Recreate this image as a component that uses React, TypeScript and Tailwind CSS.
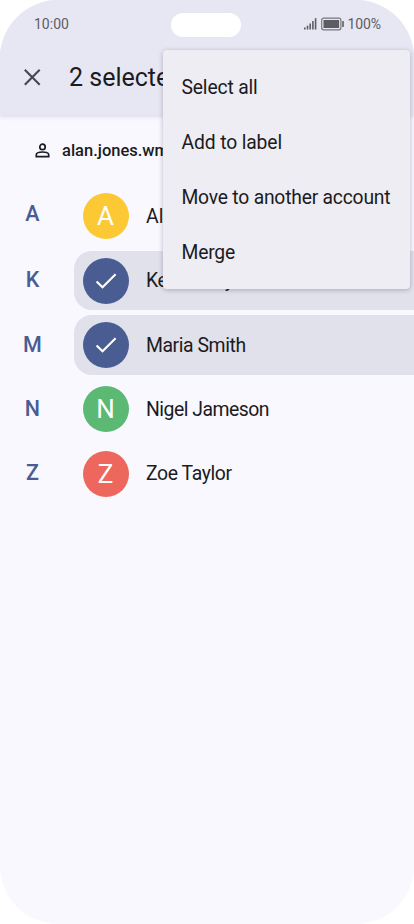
const contacts = [
  { letter: "A", name: "Alan Jones", color: "bg-[#fcc934]", selected: false, offset: "mb-1", tracking: "tracking-[0.1px]" },
  { letter: "K", name: "Kevin Gray", color: "bg-[#495d92]", selected: true, offset: "mb-0", tracking: "tracking-[-0.3px]" },
  { letter: "M", name: "Maria Smith", color: "bg-[#495d92]", selected: true, offset: "mb-0", tracking: "tracking-[-0.43px]" },
  { letter: "N", name: "Nigel Jameson", color: "bg-[#5bb974]", selected: false, offset: "mb-0", tracking: "tracking-[-0.5px]" },
  { letter: "Z", name: "Zoe Taylor", color: "bg-[#ee675c]", selected: false, offset: "mb-0", tracking: "tracking-[-0.4px]" },
];

const actions = [
  { label: "Select all", spacing: "tracking-[-0.16px]" },
  { label: "Add to label", spacing: "tracking-[-0.12px]" },
  { label: "Move to another account", spacing: "tracking-[-0.21px]" },
  { label: "Merge", spacing: "tracking-[-0.2px]" },
];

function StatusBar() {
  return (
    <div className="flex h-[47px] items-center text-[14px] text-[#5c5c66]">
      <span className="mt-px ml-[34px] w-[137px] tracking-[0px]">10:00</span>
      <span className="mt-[2px] h-6 w-[70px] rounded-full bg-white" />
      <svg className="ml-[62px]" width="42" height="14" viewBox="0 0 42 14" fill="#5c5c62">
        <rect x="1" y="10.5" width="1.6" height="2" />
        <rect x="3.7" y="8.7" width="1.6" height="3.8" />
        <rect x="6.4" y="6.5" width="1.6" height="6" />
        <rect x="9.1" y="4" width="1.6" height="8.5" />
        <rect x="11.8" y="1.2" width="1.6" height="11.3" />
        <rect x="18.7" y="1.2" width="19.2" height="11.6" rx="2" fill="none" stroke="#77777e" strokeWidth="1.2" />
        <rect x="20.5" y="3" width="15.6" height="8" />
        <rect x="39.2" y="4" width="1.6" height="6" rx="0.6" />
      </svg>
      <span className="mt-px ml-[2.5px] tracking-[-0.1px]">100%</span>
    </div>
  );
}

function OverflowMenu() {
  return (
    <div className="absolute top-[50px] left-[163px] z-20 h-[239px] w-[246.5px] rounded-[4px] bg-[#eeedf4] pt-[10.5px] shadow-[0_1px_5px_rgba(50,50,80,0.32)]">
      {actions.map((a) => (
        <div key={a.label} className="flex h-[55.1px] items-center pl-[18.5px] text-[19.3px] whitespace-nowrap text-[#1b1b21]">
          <span className={a.spacing}>{a.label}</span>
        </div>
      ))}
    </div>
  );
}

export default function App() {
  return (
    <div className="h-[924px] w-[414px] overflow-hidden bg-white font-['Roboto',sans-serif]">
      <div className="relative h-full overflow-hidden rounded-[58px] bg-[#f9f8ff]">
        <header className="h-[114.5px] bg-[#e7e7f3] shadow-[0_1px_5px_rgba(60,60,90,0.2)]">
          <StatusBar />
          <div className="flex h-[60px] items-center pl-6">
            <svg width="17" height="17" viewBox="0 0 17 17" fill="none" stroke="#45464f" strokeWidth="2.1">
              <path d="M0.8 0.8 15.7 15.7M15.7 0.8 0.8 15.7" />
            </svg>
            <h1 className="mt-[2px] ml-7 text-[25px] whitespace-nowrap text-[#1b1b21]">2 selected</h1>
          </div>
        </header>
        <div className="flex h-[69.5px] items-center pt-[2px] pl-[35px]">
          <svg width="15" height="15" viewBox="0 0 15 15" fill="none" stroke="#1b1b21" strokeWidth="1.7">
            <circle cx="7.5" cy="3.9" r="2.7" />
            <path d="M1.3 13.6V11.7C1.3 9.8 5 9 7.5 9S13.7 9.8 13.7 11.7V13.6Z" />
          </svg>
          <span className="mt-[2px] ml-3 text-[16.5px] font-medium whitespace-nowrap text-[#1b1b21]">alan.jones.wm@gmail.com</span>
        </div>
        <ul>
          {contacts.map((c) => (
            <li key={c.letter} className="flex h-[64.35px] items-center">
              <span className={`w-[65px] text-center text-[21.5px] font-medium text-[#495d92] ${c.offset}`}>{c.letter}</span>
              <div className={`ml-[8.5px] flex h-[59.6px] flex-1 items-center rounded-l-[18px] pl-[9px] ${c.selected ? "bg-[#e1e1eb]" : ""}`}>
                <span className={`flex size-[46px] items-center justify-center rounded-full pt-px text-[26px] text-white ${c.color}`}>
                  {c.selected ? (
                    <svg width="22" height="18" viewBox="0 0 22 18" fill="none" stroke="white" strokeWidth="2.1">
                      <path d="M1.6 9.5 7.5 15.3 20.6 2.3" />
                    </svg>
                  ) : (
                    c.letter
                  )}
                </span>
                <span className={`mt-px ml-[17.5px] text-[19.4px] whitespace-nowrap text-[#1b1b21] ${c.tracking}`}>{c.name}</span>
              </div>
            </li>
          ))}
        </ul>
        <OverflowMenu />
      </div>
    </div>
  );
}
